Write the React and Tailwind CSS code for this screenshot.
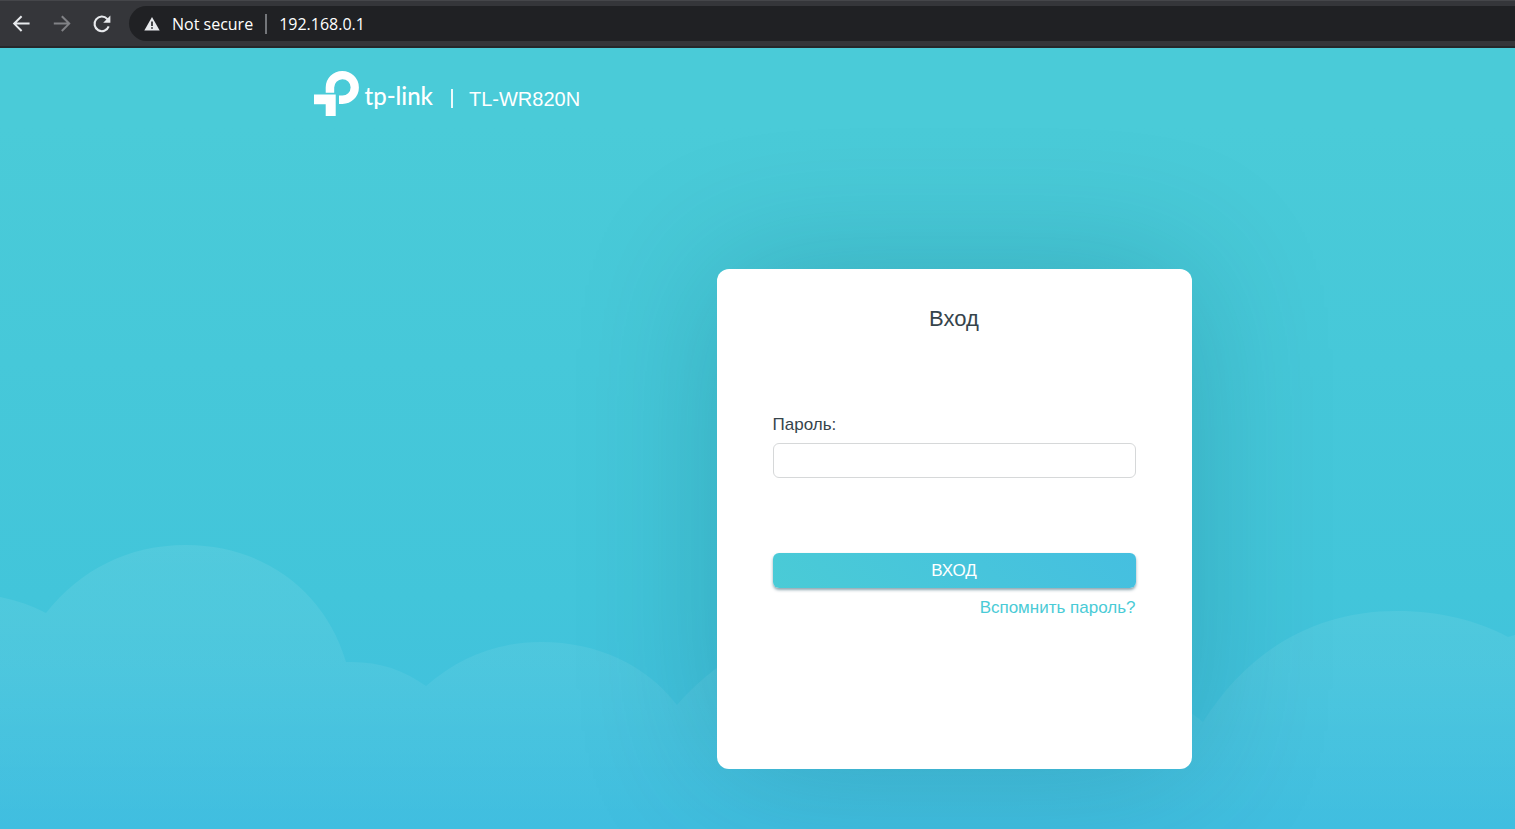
function BrowserBar() {
  return (
    <div className="flex h-12 items-center border-t border-b-2 border-t-[#45464a] border-b-[#26282b] bg-[#35363a] font-['Open_Sans',sans-serif]">
      <div className="flex shrink-0 items-center gap-5 pl-3">
        <button type="button" aria-label="Back" className="text-[#e8eaed]">
          <svg className="size-5" viewBox="0 0 20 20" fill="none" stroke="currentColor" strokeWidth="2">
            <path d="M17.6 9.6H2.8M9.6 2.2L2.2 9.6L9.6 17" />
          </svg>
        </button>
        <button type="button" aria-label="Forward" className="text-[#818286]">
          <svg className="size-5" viewBox="0 0 20 20" fill="none" stroke="currentColor" strokeWidth="2">
            <path d="M1.8 9.6H16.6M9.8 2.2L17.2 9.6L9.8 17" />
          </svg>
        </button>
        <button type="button" aria-label="Reload" className="text-[#e8eaed]">
          <svg className="size-5" viewBox="0 0 20 20">
            <path d="M16.7 12.4A7.3 7.3 0 1 1 15.2 4.9L16.4 6.2" fill="none" stroke="currentColor" strokeWidth="2.1" />
            <path d="M18.4 1.6V8.8H11.2Z" fill="currentColor" />
          </svg>
        </button>
      </div>
      <div className="ml-[17px] flex h-[35px] flex-1 items-center rounded-l-full bg-[#202124] pl-[15px] text-base text-white">
        <svg className="size-4" viewBox="0 0 16 16">
          <path d="M8 1L15.7 14.6H0.3Z" fill="#e8eaed" />
          <path d="M7.2 5.5H8.8V10H7.2ZM7.2 11.2H8.8V12.8H7.2Z" fill="#202124" />
        </svg>
        <span className="ml-3">Not secure</span>
        <span className="mx-3 h-5 w-0.5 bg-[#74767a]" />
        <span>192.168.0.1</span>
      </div>
    </div>
  );
}

function Clouds() {
  return (
    <svg
      className="absolute inset-x-0 bottom-0 h-[289px] w-full"
      viewBox="0 540 1515 289"
      preserveAspectRatio="none"
      aria-hidden="true"
    >
      <defs>
        <linearGradient id="cloud" x1="0" y1="0" x2="0" y2="1">
          <stop offset="0" stopColor="#fff" stopOpacity="0.08" />
          <stop offset="0.45" stopColor="#fff" stopOpacity="0.06" />
          <stop offset="1" stopColor="#fff" stopOpacity="0" />
        </linearGradient>
      </defs>
      <path
        fill="url(#cloud)"
        d="M0 597Q25 602 46 613C80 570 128 545 186 545C262 545 325 590 346 662C378 661 402 669 426 686C459 657 497 642 541 642C598 642 646 665 677 705C720 655 780 625 850 625C980 625 1130 660 1203 722C1250 648 1317 611 1397 611C1440 611 1479 621 1508 637L1515 635V829H0Z"
      />
    </svg>
  );
}

function Logo() {
  return (
    <div className="flex items-start text-white">
      <svg className="size-[45px]" viewBox="0 0 45 45" fill="currentColor" aria-hidden="true">
        <path d="M11.7 21.8V16.5A16.6 16.5 0 1 1 28.4 33H25V24.6H28.4A8.2 8.2 0 1 0 20.2 16.5V21.8Z" />
        <path d="M0 23.5H21.7V45H11.7V33.2H0Z" />
      </svg>
      <span className="ml-1.5 mt-[9px] font-['Lato',sans-serif] text-2xl leading-8 font-medium">tp-link</span>
      <span className="ml-[18px] mt-[18px] h-[19px] w-0.5 bg-white/90" />
      <span className="ml-4 mt-4 text-xl leading-6">TL-WR820N</span>
    </div>
  );
}

function LoginCard() {
  return (
    <form className="flex min-h-[500px] w-full max-w-[475px] flex-col rounded-xl bg-white px-14 pt-9 shadow-[0_0_140px_rgba(0,70,80,0.22)]">
      <h1 className="text-center text-[22px] leading-7 text-[#36444b]">Вход</h1>
      <label htmlFor="password" className="mt-20 text-[17px] leading-6 text-[#36444b]">
        Пароль:
      </label>
      <input
        id="password"
        type="password"
        className="mt-1.5 h-[35px] w-full rounded-md border border-[#d6d8d9] bg-white px-3 text-[17px] text-[#36444b] outline-none"
      />
      <button
        type="button"
        className="mt-[75px] h-[35px] w-full rounded-md bg-linear-45 from-[#4acbd6] to-[#45bfe0] text-[17px] leading-6 text-white shadow-[0_2px_3px_rgba(30,80,100,0.5)]"
      >
        ВХОД
      </button>
      <a href="#recover" className="mt-2 self-end text-[17px] leading-6 text-[#4acbd6]">
        Вспомнить пароль?
      </a>
    </form>
  );
}

export default function App() {
  return (
    <div className="flex min-h-screen flex-col font-['Liberation_Sans',Arial,sans-serif]">
      <BrowserBar />
      <main className="relative flex-1 overflow-hidden bg-linear-to-b from-[#4acbd8] from-10% via-[#42c5da] via-70% to-[#40bee0]">
        <Clouds />
        <div className="relative mx-auto max-w-[888px] pt-[23px] pb-[60px]">
          <Logo />
          <div className="mt-[153px] flex justify-end pr-[10px]">
            <LoginCard />
          </div>
        </div>
      </main>
    </div>
  );
}
